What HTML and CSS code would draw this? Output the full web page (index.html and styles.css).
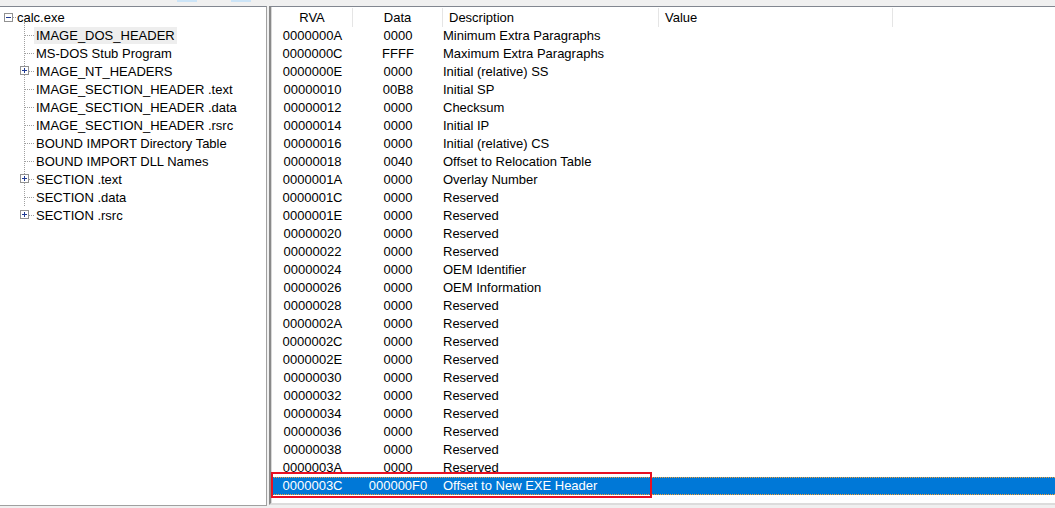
FILE: index.html
```html
<!DOCTYPE html>
<html>
<head>
<meta charset="utf-8">
<link rel="stylesheet" href="styles.css">
</head>
<body>
<div class="topbar">
  <span class="tab-hint h1"></span>
  <span class="tab-hint h2"></span>
</div>
<div class="main">
  <div class="tree">
    <div class="node root">
      <span class="exp minus"></span><span class="hline short"></span><span class="label">calc.exe</span>
    </div>
    <div class="children">
      <div class="node child"><span class="conn"></span><span class="label sel">IMAGE_DOS_HEADER</span></div>
      <div class="node child"><span class="conn"></span><span class="label">MS-DOS Stub Program</span></div>
      <div class="node child"><span class="conn"></span><span class="exp plus"></span><span class="label">IMAGE_NT_HEADERS</span></div>
      <div class="node child"><span class="conn"></span><span class="label">IMAGE_SECTION_HEADER .text</span></div>
      <div class="node child"><span class="conn"></span><span class="label">IMAGE_SECTION_HEADER .data</span></div>
      <div class="node child"><span class="conn"></span><span class="label">IMAGE_SECTION_HEADER .rsrc</span></div>
      <div class="node child"><span class="conn"></span><span class="label">BOUND IMPORT Directory Table</span></div>
      <div class="node child"><span class="conn"></span><span class="label">BOUND IMPORT DLL Names</span></div>
      <div class="node child"><span class="conn"></span><span class="exp plus"></span><span class="label">SECTION .text</span></div>
      <div class="node child"><span class="conn"></span><span class="label">SECTION .data</span></div>
      <div class="node child last"><span class="conn"></span><span class="exp plus"></span><span class="label">SECTION .rsrc</span></div>
    </div>
  </div>
  <div class="list">
    <div class="row head">
      <div class="c rva">RVA</div>
      <div class="c data">Data</div>
      <div class="c desc">Description</div>
      <div class="c val">Value</div>
      <div class="c rest"></div>
    </div>
    <div class="row"><div class="c rva">0000000A</div><div class="c data">0000</div><div class="c desc">Minimum Extra Paragraphs</div></div>
    <div class="row"><div class="c rva">0000000C</div><div class="c data">FFFF</div><div class="c desc">Maximum Extra Paragraphs</div></div>
    <div class="row"><div class="c rva">0000000E</div><div class="c data">0000</div><div class="c desc">Initial (relative) SS</div></div>
    <div class="row"><div class="c rva">00000010</div><div class="c data">00B8</div><div class="c desc">Initial SP</div></div>
    <div class="row"><div class="c rva">00000012</div><div class="c data">0000</div><div class="c desc">Checksum</div></div>
    <div class="row"><div class="c rva">00000014</div><div class="c data">0000</div><div class="c desc">Initial IP</div></div>
    <div class="row"><div class="c rva">00000016</div><div class="c data">0000</div><div class="c desc">Initial (relative) CS</div></div>
    <div class="row"><div class="c rva">00000018</div><div class="c data">0040</div><div class="c desc">Offset to Relocation Table</div></div>
    <div class="row"><div class="c rva">0000001A</div><div class="c data">0000</div><div class="c desc">Overlay Number</div></div>
    <div class="row"><div class="c rva">0000001C</div><div class="c data">0000</div><div class="c desc">Reserved</div></div>
    <div class="row"><div class="c rva">0000001E</div><div class="c data">0000</div><div class="c desc">Reserved</div></div>
    <div class="row"><div class="c rva">00000020</div><div class="c data">0000</div><div class="c desc">Reserved</div></div>
    <div class="row"><div class="c rva">00000022</div><div class="c data">0000</div><div class="c desc">Reserved</div></div>
    <div class="row"><div class="c rva">00000024</div><div class="c data">0000</div><div class="c desc">OEM Identifier</div></div>
    <div class="row"><div class="c rva">00000026</div><div class="c data">0000</div><div class="c desc">OEM Information</div></div>
    <div class="row"><div class="c rva">00000028</div><div class="c data">0000</div><div class="c desc">Reserved</div></div>
    <div class="row"><div class="c rva">0000002A</div><div class="c data">0000</div><div class="c desc">Reserved</div></div>
    <div class="row"><div class="c rva">0000002C</div><div class="c data">0000</div><div class="c desc">Reserved</div></div>
    <div class="row"><div class="c rva">0000002E</div><div class="c data">0000</div><div class="c desc">Reserved</div></div>
    <div class="row"><div class="c rva">00000030</div><div class="c data">0000</div><div class="c desc">Reserved</div></div>
    <div class="row"><div class="c rva">00000032</div><div class="c data">0000</div><div class="c desc">Reserved</div></div>
    <div class="row"><div class="c rva">00000034</div><div class="c data">0000</div><div class="c desc">Reserved</div></div>
    <div class="row"><div class="c rva">00000036</div><div class="c data">0000</div><div class="c desc">Reserved</div></div>
    <div class="row"><div class="c rva">00000038</div><div class="c data">0000</div><div class="c desc">Reserved</div></div>
    <div class="row"><div class="c rva">0000003A</div><div class="c data">0000</div><div class="c desc">Reserved</div></div>
    <div class="row selected"><div class="c rva">0000003C</div><div class="c data">000000F0</div><div class="c desc">Offset to New EXE Header</div><span class="redbox"></span></div>
  </div>
</div>
</body>
</html>
```
FILE: styles.css
```css
* { box-sizing: border-box; }
html, body { margin: 0; padding: 0; }
body {
  width: 1055px;
  height: 508px;
  overflow: hidden;
  background: #f0f0f0;
  font-family: "Liberation Sans", Arial, sans-serif;
  font-size: 13px;
  color: #000;
}
.topbar {
  height: 6px;
  position: relative;
}
.tab-hint {
  position: absolute;
  top: 0;
  height: 2px;
  width: 20px;
  background: #cce4f7;
}
.tab-hint.h1 { left: 177px; }
.tab-hint.h2 { left: 231px; }

.main {
  display: flex;
  height: 500px;
  gap: 2px;
}
.tree {
  width: 267px;
  background: #fff;
  border-top: 1px solid #828790;
  border-right: 1px solid #a0a0a0;
  border-bottom: 1px solid #a0a0a0;
  height: 500px;
  padding-top: 1px;
}
.node {
  height: 18px;
  display: flex;
  align-items: center;
  position: relative;
  line-height: 18px;
  white-space: nowrap;
}
.root { padding-left: 4px; }
.exp {
  width: 9px;
  height: 9px;
  border: 1px solid #919191;
  background: #fff;
  position: relative;
  flex: none;
}
.exp::before {
  content: "";
  position: absolute;
  left: 1px;
  top: 3px;
  width: 5px;
  height: 1px;
  background: #1f3a93;
}
.plus::after {
  content: "";
  position: absolute;
  left: 3px;
  top: 1px;
  width: 1px;
  height: 5px;
  background: #1f3a93;
}
.hline.short {
  width: 3px;
  border-top: 1px dotted #a0a0a0;
  margin: 0 1px 0 0;
}
.label {
  padding: 0 2px;
  height: 17px;
  line-height: 17px;
}
.root .label { padding-left: 0; }
.label.sel { background: #eeeeee; }
.children { position: relative; }
.children::before {
  content: "";
  position: absolute;
  left: 24px;
  top: -4px;
  height: 184px;
  border-left: 1px dotted #a0a0a0;
}
.child { padding-left: 34px; }
.conn {
  position: absolute;
  left: 25px;
  top: 9px;
  width: 9px;
  border-top: 1px dotted #a0a0a0;
}
.child .exp {
  position: absolute;
  left: 20px;
  top: 4px;
}

.list {
  flex: 1;
  background: #fff;
  border-top: 1px solid #828790;
  border-left: 2px solid #8a8a8a;
  border-bottom: 2px solid #dcdcdc;
  height: 499px;
  padding-top: 1px;
  position: relative;
  box-shadow: inset 1px 0 0 #d8d8d8;
}
.row {
  display: flex;
  height: 18px;
  line-height: 18px;
  white-space: nowrap;
  position: relative;
}
.row.head {
  height: 19px;
  line-height: 19px;
}
.c { flex: none; }
.rva { width: 82px; padding-left: 1px; text-align: center; }
.data { width: 90px; text-align: center; }
.desc { width: 216px; padding-left: 0; }
.head .desc { padding-left: 6px; }
.val { width: 234px; padding-left: 6px; }
.rest { flex: 1; }
.head .c { border-right: 1px solid #e5e5e5; }
.head .rest { border-right: none; }
.row.selected {
  background: #0078d7;
  color: #fff;
  border-top: 1px dotted #f7a033;
  border-bottom: 1px dotted #f7a033;
  line-height: 16px;
}
.redbox {
  position: absolute;
  left: 0;
  top: -6px;
  width: 381px;
  height: 26px;
  border: 2px solid #e81123;
}
```
